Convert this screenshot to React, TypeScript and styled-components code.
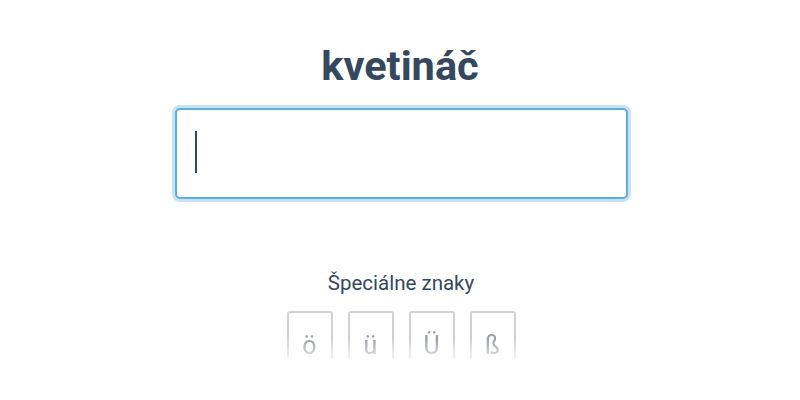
import React from 'react';
import styled, { createGlobalStyle } from 'styled-components';

const GlobalStyle = createGlobalStyle`
  html, body {
    margin: 0;
    padding: 0;
    background: #fff;
    font-family: Roboto, "Liberation Sans", sans-serif;
  }
`;

const Page = styled.div`
  width: 800px;
  height: 400px;
  display: flex;
  flex-direction: column;
  align-items: center;
  overflow: hidden;
`;

const Title = styled.h1`
  margin: 40px 0 0;
  font-size: 41.5px;
  line-height: 52px;
  font-weight: 700;
  color: #34495e;
`;

const Field = styled.div`
  position: relative;
  margin-top: 16px;
  margin-left: 2px;
`;

const AnswerInput = styled.input`
  box-sizing: border-box;
  display: block;
  width: 453px;
  height: 91px;
  padding: 0 20px;
  font-family: Roboto, "Liberation Sans", sans-serif;
  font-size: 40px;
  color: #34495e;
  caret-color: transparent;
  border: 2px solid #5dade2;
  border-radius: 5px;
  box-shadow: 0 0 0 3px rgba(93, 173, 226, 0.35);
  outline: none;
`;

const Caret = styled.span`
  position: absolute;
  left: 20px;
  top: 23px;
  width: 2px;
  height: 42px;
  background: #34495e;
  pointer-events: none;
`;

const Label = styled.div`
  margin-top: 72px;
  margin-left: 2px;
  font-size: 20.5px;
  color: #34495e;
`;

const Keys = styled.div`
  margin-top: 16px;
  margin-left: 2px;
  display: flex;
  gap: 15px;
  height: 48px;
  overflow: hidden;
  -webkit-mask-image: linear-gradient(to bottom, #000 60%, rgba(0, 0, 0, 0.25) 100%);
  mask-image: linear-gradient(to bottom, #000 60%, rgba(0, 0, 0, 0.25) 100%);
`;

const Key = styled.button`
  box-sizing: border-box;
  width: 46px;
  height: 60px;
  padding: 18px 0 0;
  background: #fff;
  border: 2px solid #d0d3d6;
  border-radius: 3px;
  font-family: Roboto, "Liberation Sans", sans-serif;
  font-size: 25px;
  color: #9ca2a8;
  display: flex;
  justify-content: center;
  align-items: flex-start;
`;

const chars = ['ö', 'ü', 'Ü', 'ß'];

export default function App() {
  return (
    <Page>
      <GlobalStyle />
      <Title>kvetináč</Title>
      <Field>
        <AnswerInput autoFocus />
        <Caret />
      </Field>
      <Label>Špeciálne znaky</Label>
      <Keys>
        {chars.map((c) => (
          <Key key={c}>{c}</Key>
        ))}
      </Keys>
    </Page>
  );
}
